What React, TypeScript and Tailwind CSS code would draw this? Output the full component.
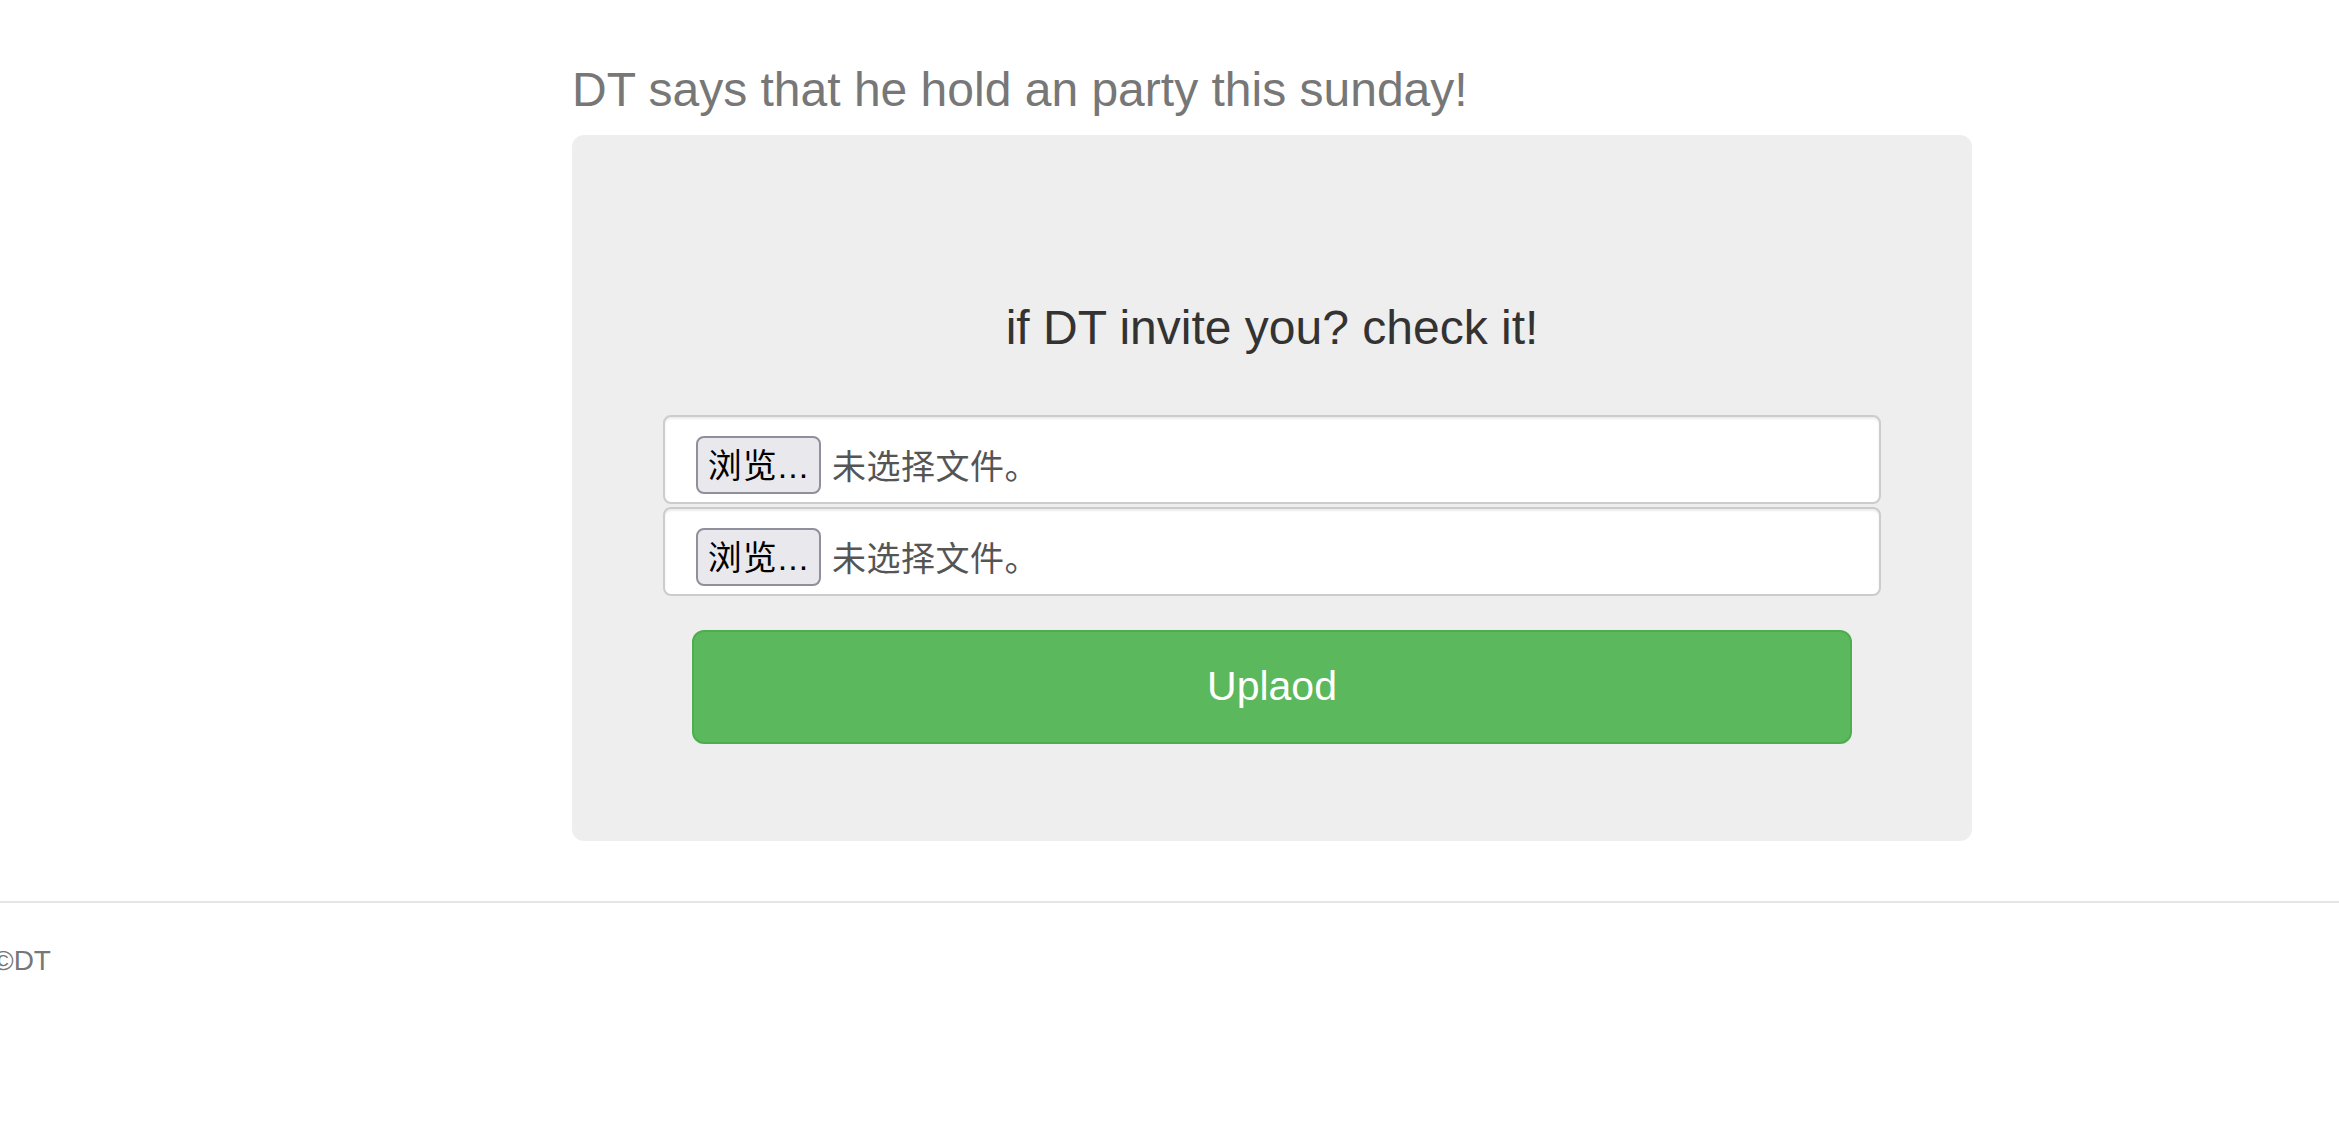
import React from 'react';

const FileRow: React.FC = () => (
  <div className="flex h-[89px] items-start rounded-[8px] border-2 border-[#cccccc] bg-white pl-[31px] pt-[19px] shadow-[inset_0_2px_2px_rgba(0,0,0,0.075)]">
    <div className="flex items-center">
      <button
        type="button"
        className="flex h-[58px] w-[125px] items-center justify-center rounded-[8px] border-2 border-[#8f8f9d] bg-[#e9e9ed] pt-[3px] text-[34px] tracking-[1px] text-black"
      >
        浏览...
      </button>
      <span className="ml-[11px] pt-[4px] text-[34px] tracking-[0.5px] text-[#555555]">未选择文件。</span>
    </div>
  </div>
);

export default function App() {
  return (
    <div className="min-h-screen bg-white font-['Liberation_Sans','Noto_Sans_CJK_SC',sans-serif]">
      <div className="ml-[572px] w-[1400px] pt-[50px]">
        <h3 className="text-[48px] leading-[80px] text-[#777777]">
          DT says that he hold an party this sunday!
        </h3>
      </div>

      <div className="ml-[572px] mt-[5px] w-[1400px] rounded-[12px] bg-[#eeeeee] px-[91px] pb-[97px] pt-[166px]">
        <h3 className="text-center text-[48px] leading-[53px] text-[#333333]">
          if DT invite you? check it!
        </h3>

        <form className="mt-[61px] flex flex-col gap-[3px]" onSubmit={(e) => e.preventDefault()}>
          <FileRow />
          <FileRow />
          <div className="mt-[31px] px-[29px]">
            <button
              type="submit"
              className="flex h-[114px] w-full items-center justify-center rounded-[12px] border-2 border-[#4cae4c] bg-[#5cb85c] text-[41px] text-white"
            >
              Uplaod
            </button>
          </div>
        </form>
      </div>

      <footer className="mt-[60px] border-t-2 border-[#e5e5e5] pt-[38px]">
        <p className="ml-[-7px] text-[28px] leading-[40px] text-[#777777]">©DT</p>
      </footer>
    </div>
  );
}
